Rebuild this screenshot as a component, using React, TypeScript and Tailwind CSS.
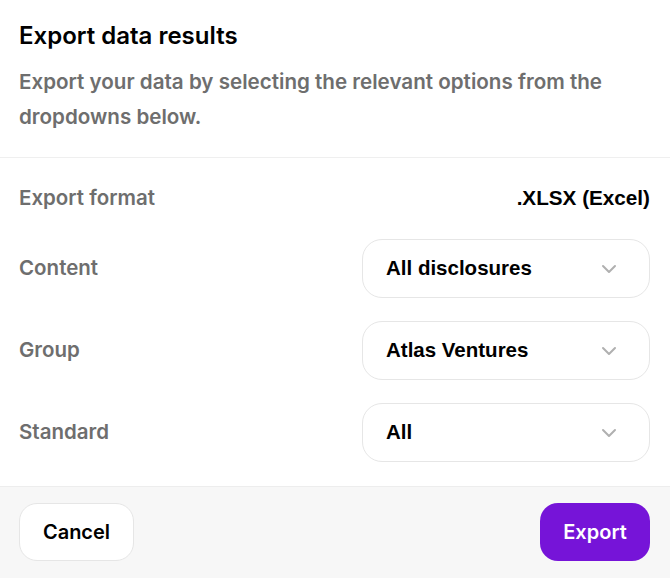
import { ChevronDown } from "lucide-react";

const selects = [
  { label: "Content", value: "All disclosures" },
  { label: "Group", value: "Atlas Ventures" },
  { label: "Standard", value: "All" },
];

export default function App() {
  return (
    <div className="w-[670px] h-[578px] bg-white flex flex-col font-['Inter',sans-serif] overflow-hidden">
      <div className="px-[19px] pt-[20px] pb-[23px] border-b border-[#efefef]">
        <h1 className="text-[24px] leading-[32px] font-semibold text-black">Export data results</h1>
        <p className="mt-[12px] text-[20.6px] leading-[35px] font-semibold text-[#6e6e6e]">
          Export your data by selecting the relevant options from the dropdowns below.
        </p>
      </div>

      <div className="flex-1 flex flex-col gap-[23px] px-[19px] pr-[20px] pt-[22px] pb-[22px]">
        <div className="h-[36px] flex items-center justify-between">
          <span className="text-[20.5px] font-semibold text-[#6e6e6e]">Export format</span>
          <span className="text-[20.7px] font-bold text-black font-['Liberation_Sans',sans-serif]">.XLSX (Excel)</span>
        </div>
        {selects.map((s) => (
          <div key={s.label} className="flex items-center justify-between">
            <span className="text-[20.5px] font-semibold text-[#6e6e6e]">{s.label}</span>
            <button className="w-[288px] h-[59px] rounded-[20px] border border-[#e6e6e6] bg-white flex items-center justify-between pl-[23px] pr-[28px]">
              <span className="text-[20.5px] font-bold text-black font-['Liberation_Sans',sans-serif]">{s.value}</span>
              <ChevronDown className="w-[24px] h-[24px] text-[#b0b0b0]" strokeWidth={2} />
            </button>
          </div>
        ))}
      </div>

      <div className="bg-[#f7f7f7] border-t border-[#ededed] px-[19px] pr-[20px] pt-[16px] pb-[17px] flex items-center justify-between">
        <button className="w-[115px] h-[58px] rounded-[18px] border border-[#e6e6e6] bg-white text-[20px] font-semibold text-black">
          Cancel
        </button>
        <button className="w-[110px] h-[58px] rounded-[18px] bg-[#7614d8] text-[20px] font-semibold text-white">
          Export
        </button>
      </div>
    </div>
  );
}
